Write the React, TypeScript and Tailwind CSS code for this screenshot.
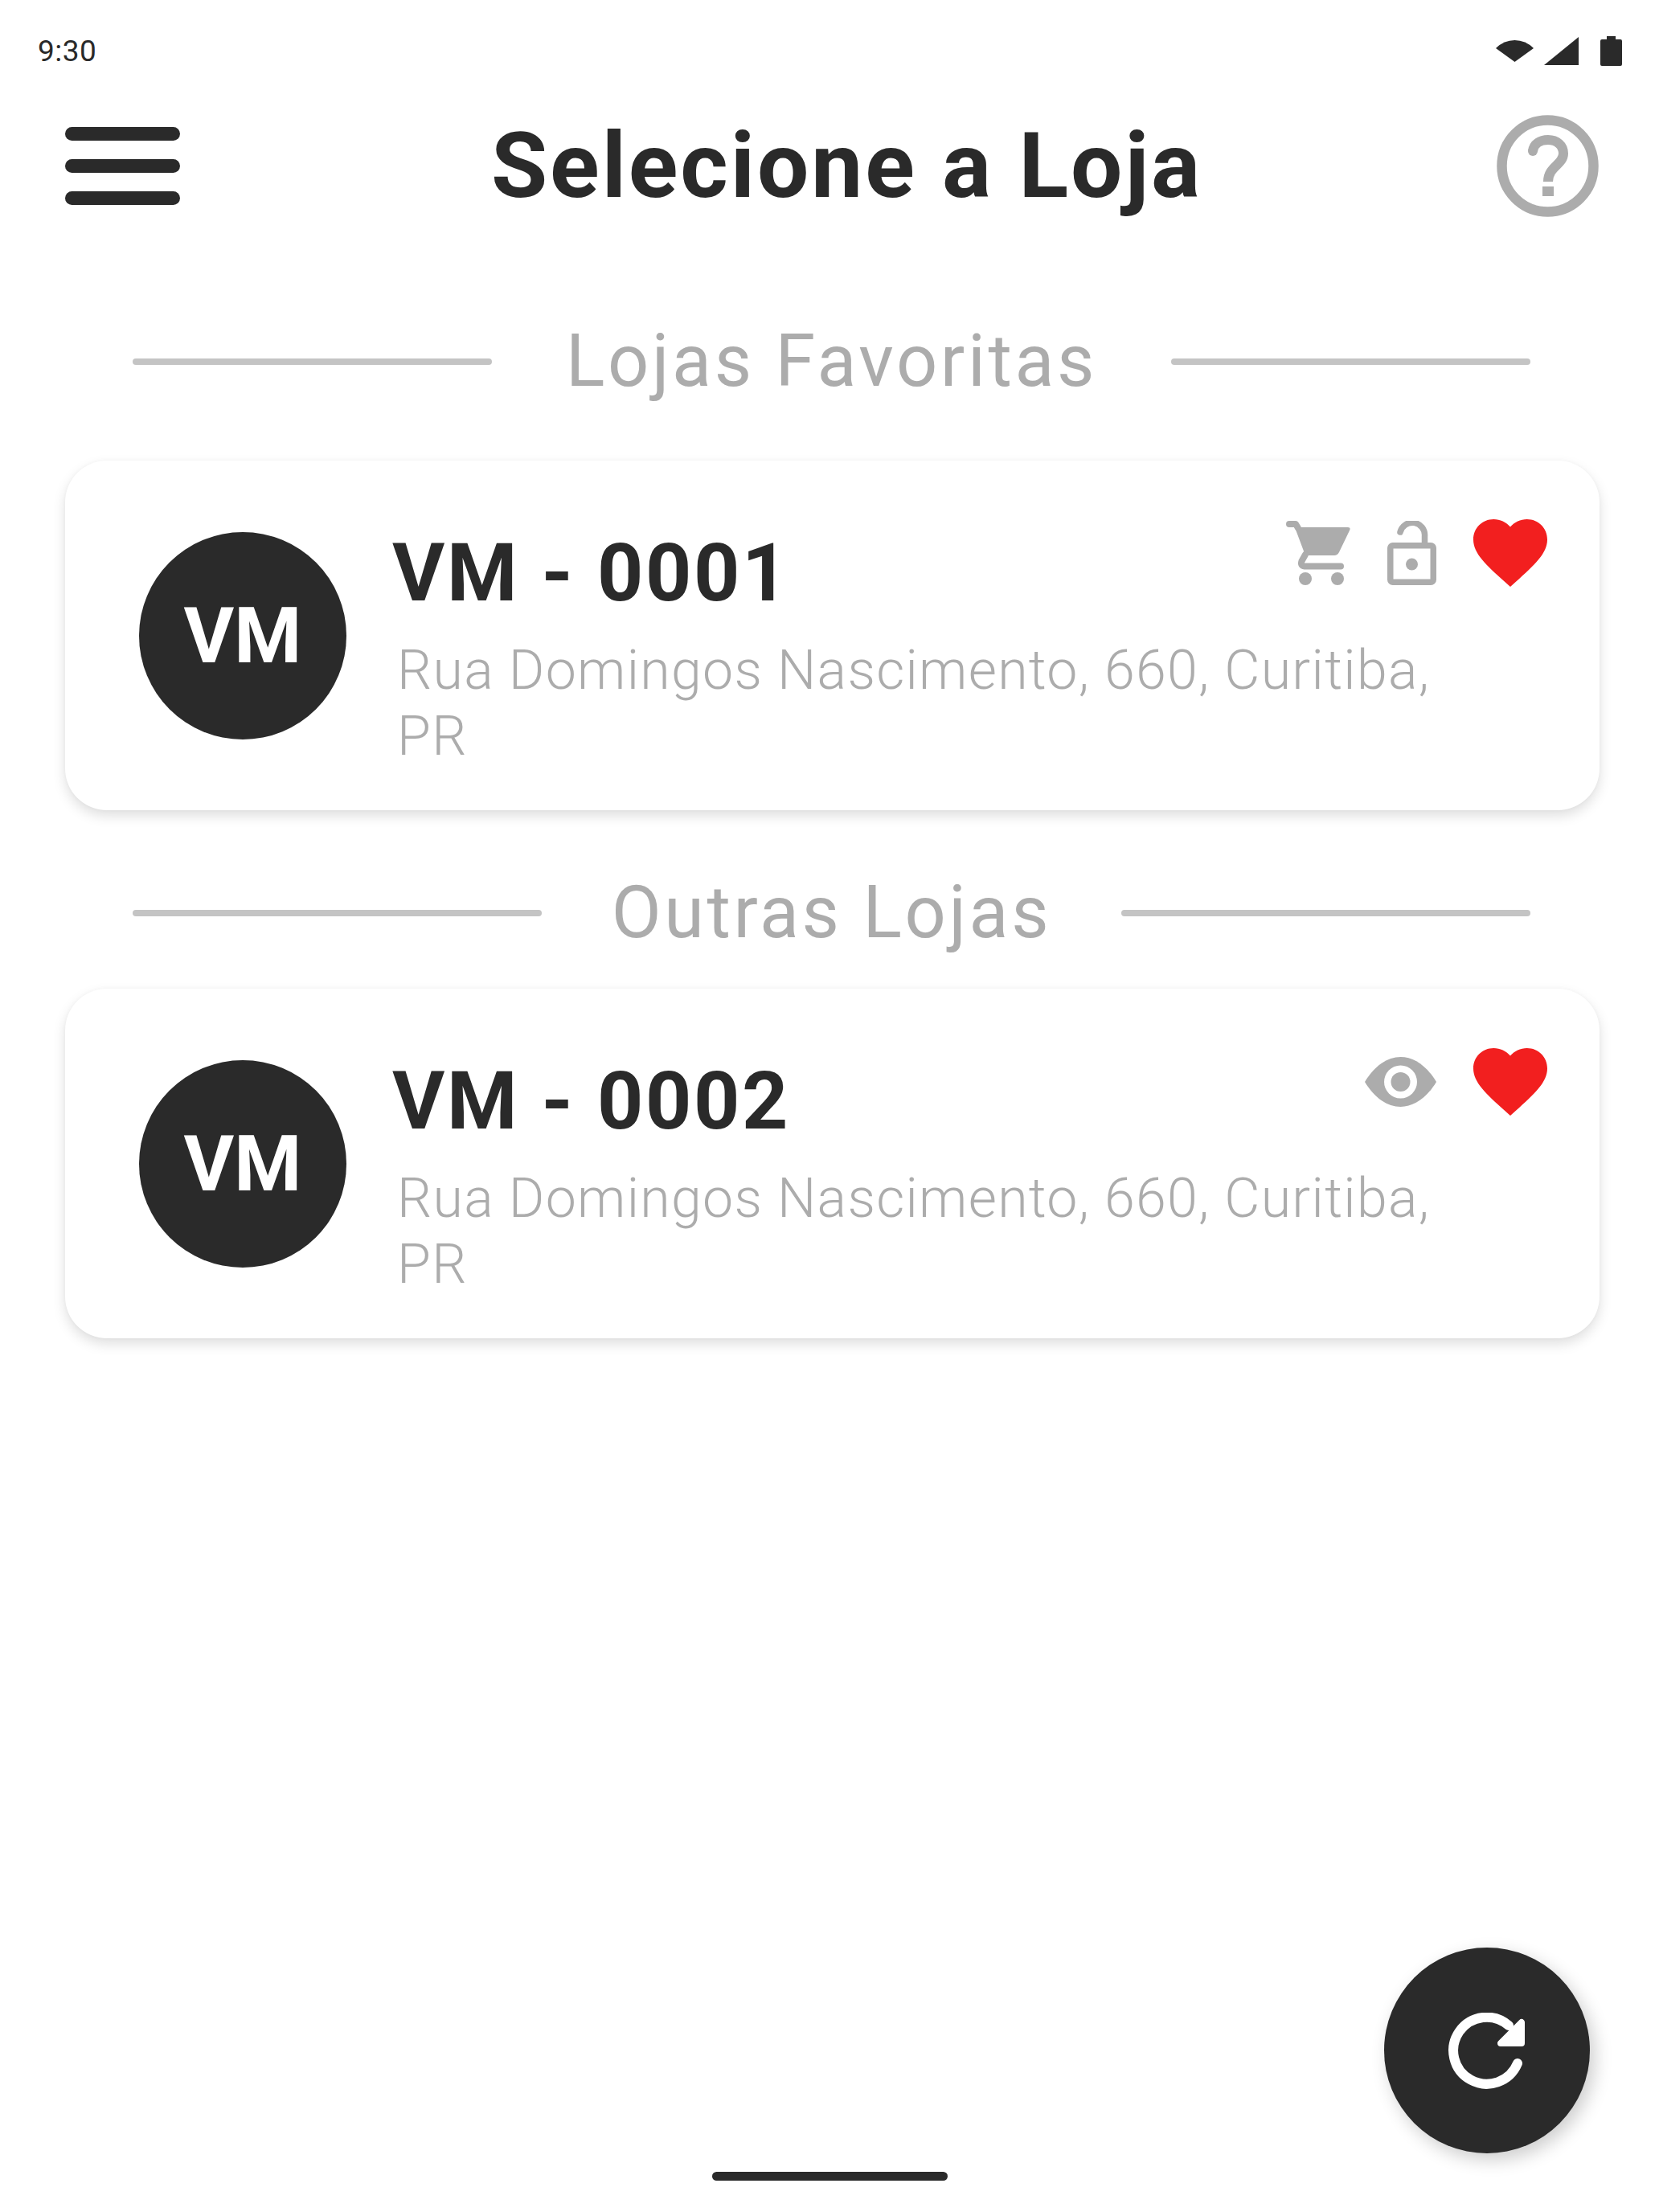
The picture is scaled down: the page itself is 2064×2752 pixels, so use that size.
function Heart() {
  return (
    <svg width="92" height="84" viewBox="2 3 20 18.35" preserveAspectRatio="none" className="block">
      <path fill="#f21f1f" d="M12 21.35l-1.45-1.32C5.4 15.36 2 12.28 2 8.5 2 5.42 4.42 3 7.5 3c1.74 0 3.41.81 4.5 2.09C13.09 3.81 14.76 3 16.5 3 19.58 3 22 5.42 22 8.5c0 3.78-3.4 6.86-8.55 11.54L12 21.35z" />
    </svg>
  );
}
function Cart() {
  return (
    <svg width="80" height="80" viewBox="0 0 80 80" className="block mt-[2px]">
      <path d="M4 4H12L15 9" fill="none" stroke="#acacac" strokeWidth="8" strokeLinecap="round" strokeLinejoin="round" />
      <path d="M12 11 Q11 8 14 8 H77 Q81 8 79 12 L66 39 Q64 43 60 43 H24 Z" fill="#acacac" />
      <path d="M24 42 L19.5 50 Q17.5 56 23 56.5 H68" fill="none" stroke="#acacac" strokeWidth="8" strokeLinecap="round" strokeLinejoin="round" />
      <circle cx="24" cy="72" r="8" fill="#acacac" />
      <circle cx="64" cy="72" r="8" fill="#acacac" />
    </svg>
  );
}
function Lock() {
  return (
    <svg width="61" height="80" viewBox="0 0 61 80" className="block mt-[2px]">
      <rect x="3.75" y="30.75" width="53.5" height="45.5" rx="3" fill="none" stroke="#acacac" strokeWidth="7.5" />
      <path d="M16 14 A15.5 15.5 0 0 1 46.5 19 V28" fill="none" stroke="#acacac" strokeWidth="7.5" strokeLinecap="round" />
      <circle cx="30.5" cy="54" r="7.5" fill="#acacac" />
    </svg>
  );
}
function Eye() {
  return (
    <svg width="89" height="62" viewBox="0 0 89 62" className="block mt-[11px]">
      <path d="M0 31 C12 11 28 0 44.5 0 C61 0 77 11 89 31 C77 51 61 62 44.5 62 C28 62 12 51 0 31 Z" fill="#acacac" />
      <circle cx="44.5" cy="31" r="20.5" fill="#ffffff" />
      <circle cx="44.5" cy="31" r="12" fill="#acacac" />
    </svg>
  );
}
function Section({ title, pad }: { title: string; pad: string }) {
  return (
    <div className="flex items-center h-[110px] ml-[165px] w-[1739px]">
      <div className="flex-1 h-[8px] rounded-full bg-[#c4c4c4]" />
      <span className={pad + " text-[90px] leading-[110px] font-normal text-[#acacac] font-['Roboto',sans-serif] tracking-[3.6px]"}>{title}</span>
      <div className="flex-1 h-[8px] rounded-full bg-[#c4c4c4]" />
    </div>
  );
}
function Card({ name, icons }: { name: string; icons: React.ReactNode }) {
  return (
    <div className="flex items-start ml-[81px] w-[1909px] h-[435px] pt-[89px] pl-[92px] pr-[65px] bg-white rounded-[52px] shadow-[0_7px_16px_rgba(0,0,0,0.13),0_0_5px_rgba(0,0,0,0.03)]">
      <div className="flex items-center justify-center w-[258px] h-[258px] shrink-0 rounded-full bg-[#2a2a2a] text-white text-[96px] leading-none font-bold font-['Roboto',sans-serif]">VM</div>
      <div className="flex-1 ml-[57px]">
        <div className="flex items-start justify-between pt-[1px]">
          <span className="text-[100px] leading-[100px] font-bold text-[#2a2a2a] font-['Roboto',sans-serif] tracking-[2.6px]">{name}</span>
          <div className="flex items-start gap-[46px] -mt-[17px]">{icons}</div>
        </div>
        <p className="mt-[30px] ml-[6px] max-w-[1310px] text-[68px] leading-[82px] font-light text-[#acacac] font-['Roboto',sans-serif] tracking-[1.3px]">Rua Domingos Nascimento, 660, Curitiba, PR</p>
      </div>
    </div>
  );
}
export default function App() {
  return (
    <div className="relative flex flex-col w-[2064px] h-[2752px] overflow-hidden bg-white">
      <div className="flex items-center justify-between h-[126px] pl-[47px] pr-[46px]">
        <span className="text-[37px] leading-none text-[#2a2a2a] font-['Roboto',sans-serif] tracking-[0.5px]">9:30</span>
        <div className="flex items-center">
          <svg width="47" height="27" viewBox="0 0 47 27" className="block">
            <path d="M0 10 Q10 0 23.5 0 Q37 0 47 10 L23.5 27 Z" fill="#2a2a2a" />
          </svg>
          <svg width="43" height="35" viewBox="0 0 43 35" className="block ml-[13px]">
            <path d="M43 0V35H0Z" fill="#2a2a2a" />
          </svg>
          <svg width="27" height="37" viewBox="0 0 27 37" className="block ml-[27px]">
            <path d="M8 0H19V4H25Q27 4 27 6V35Q27 37 25 37H2Q0 37 0 35V6Q0 4 2 4H8Z" fill="#2a2a2a" />
          </svg>
        </div>
      </div>
      <div className="flex items-center justify-between h-[160px] pl-[81px] pr-[75px]">
        <div className="flex flex-col gap-[23px] w-[143px]">
          <div className="h-[17px] rounded-full bg-[#2a2a2a]" />
          <div className="h-[17px] rounded-full bg-[#2a2a2a]" />
          <div className="h-[17px] rounded-full bg-[#2a2a2a]" />
        </div>
        <h1 className="ml-[21px] text-[114px] leading-[160px] font-bold text-[#2a2a2a] font-['Roboto',sans-serif] tracking-[3px]">Selecione a Loja</h1>
        <svg width="127" height="127" viewBox="0 0 127 127" className="block">
          <circle cx="63.5" cy="63.5" r="57" fill="none" stroke="#acacac" strokeWidth="12.5" />
          <circle cx="45" cy="45" r="6" fill="#acacac" />
          <path d="M45 45 C46 36 54 31 64 31 C75 31 83 38 83 48 C83 62 64 64 64 83" fill="none" stroke="#acacac" strokeWidth="12" />
          <rect x="57" y="89" width="14" height="12" fill="#acacac" />
        </svg>
      </div>
      <div className="mt-[109px]"><Section title="Lojas Favoritas" pad="px-[92px]" /></div>
      <div className="mt-[68px]">
        <Card name="VM - 0001" icons={<><Cart /><Lock /><Heart /></>} />
      </div>
      <div className="mt-[73px]"><Section title="Outras Lojas" pad="px-[87px]" /></div>
      <div className="mt-[39px]">
        <Card name="VM - 0002" icons={<div className="flex items-start gap-[46px] mt-[1px]"><Eye /><Heart /></div>} />
      </div>
      <div className="mt-auto mb-[39px] mx-auto w-[293px] h-[11px] rounded-full bg-[#2a2a2a]" />
      <button className="absolute left-[1722px] top-[2423px] flex items-center justify-center w-[256px] h-[256px] rounded-full bg-[#2a2a2a] shadow-[6px_8px_22px_rgba(0,0,0,0.2)]">
        <svg width="96" height="95" viewBox="0 0 96 95" className="block">
          <path d="M86 63 A41.5 41.5 0 1 1 75 16" fill="none" stroke="#ffffff" strokeWidth="12" strokeLinecap="round" />
          <path d="M91 12V38H65Z" fill="#ffffff" stroke="#ffffff" strokeWidth="8" strokeLinejoin="round" />
        </svg>
      </button>
    </div>
  );
}
